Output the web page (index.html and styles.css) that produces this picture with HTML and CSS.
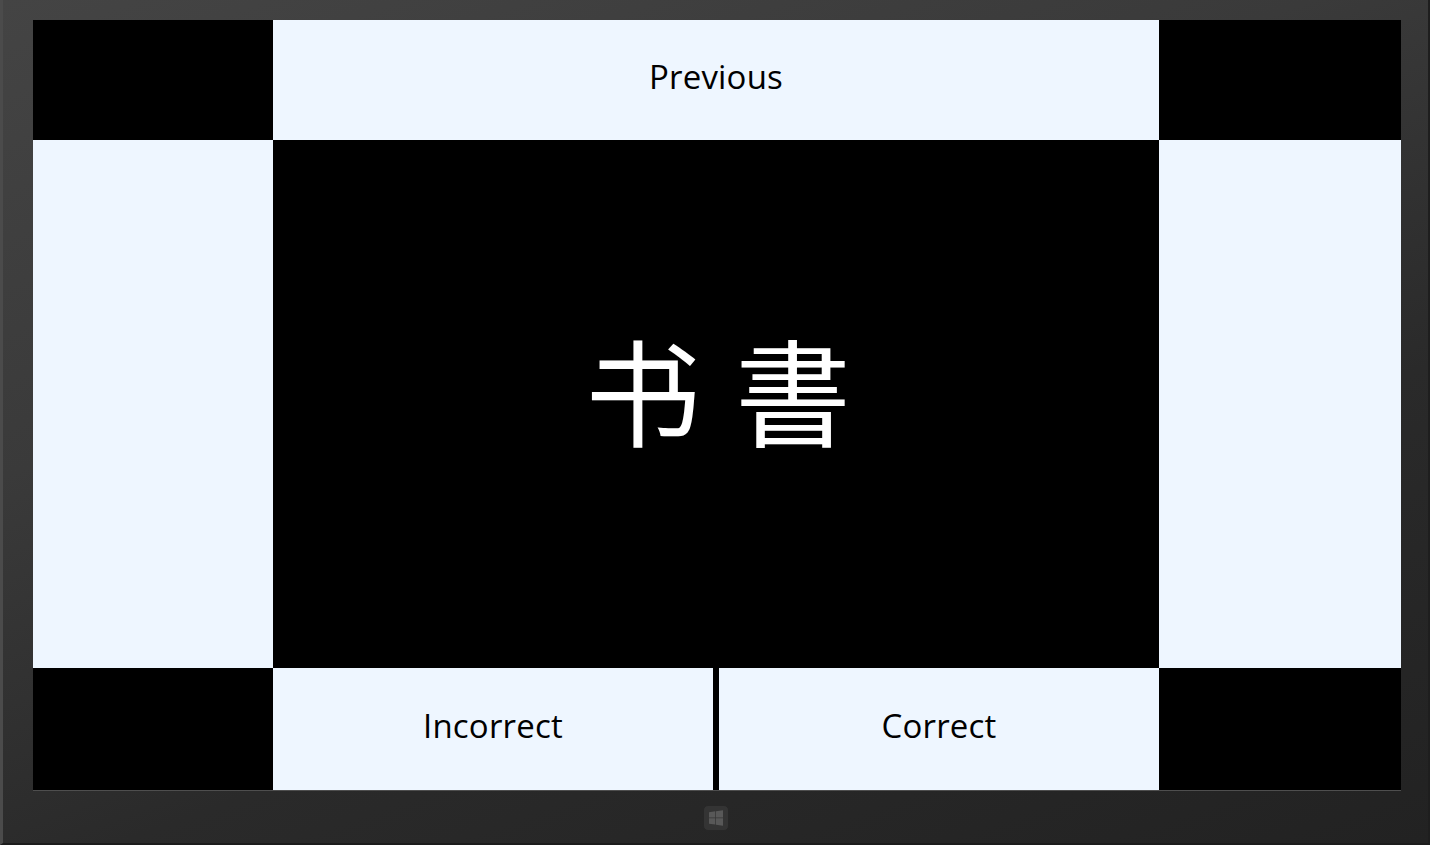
FILE: index.html
```html
<!DOCTYPE html>
<html lang="zh">
<head>
<meta charset="utf-8">
<title>Flashcard</title>
<link rel="stylesheet" href="styles.css">
</head>
<body>
<div class="device">
  <div class="screen">
    <div class="cell dark"></div>
    <div class="cell light label">Previous</div>
    <div class="cell dark"></div>
    <div class="cell light"></div>
    <div class="cell dark card">书 書</div>
    <div class="cell light"></div>
    <div class="cell dark"></div>
    <div class="cell answers">
      <div class="light label">Incorrect</div>
      <div class="light label">Correct</div>
    </div>
    <div class="cell dark"></div>
  </div>
  <div class="bezel-bottom">
    <div class="winbtn">
      <svg width="16" height="16" viewBox="0 0 16 16">
        <path d="M1 2.2 L7.3 1.3 V7.5 H1 Z M8 1.2 L15 0.2 V7.5 H8 Z M1 8.3 H7.3 V14.6 L1 13.7 Z M8 8.3 H15 V15.7 L8 14.7 Z" fill="#585858"/>
      </svg>
    </div>
  </div>
</div>
</body>
</html>
```
FILE: styles.css
```css
html, body {
  margin: 0;
  padding: 0;
}
body {
  width: 1430px;
  height: 845px;
  overflow: hidden;
  font-family: "Open Sans", "Noto Sans", sans-serif;
}
.device {
  width: 1430px;
  height: 845px;
  box-sizing: border-box;
  padding: 20px 29px 0 30px;
  background: linear-gradient(160deg, #444444 0%, #3a3a3a 35%, #2a2a2a 65%, #222222 100%);
  border-left: 3px solid #4b4b4b;
  border-right: 2px solid #1e1e1e;
  border-bottom: 2px solid #1c1c1c;
  display: flex;
  flex-direction: column;
}
.screen {
  width: 1368px;
  height: 770px;
  display: grid;
  grid-template-columns: 240px 886px 242px;
  grid-template-rows: 120px 528px 122px;
  background: #000;
  box-shadow: 0 1px 0 #4e4e4e;
}
.dark {
  background: #000;
}
.light {
  background: #eef6ff;
}
.label {
  display: flex;
  align-items: center;
  justify-content: center;
  color: #000;
  font-size: 33px;
  font-family: "Open Sans", sans-serif;
  letter-spacing: 0.2px;
  padding-bottom: 7px;
  box-sizing: border-box;
}
.card {
  display: flex;
  align-items: center;
  justify-content: center;
  color: #fff;
  font-family: "Noto Sans CJK SC", "Noto Sans CJK JP", sans-serif;
  font-size: 116px;
  word-spacing: 8px;
  padding-bottom: 34px;
  padding-left: 4px;
  box-sizing: border-box;
}
.answers {
  display: flex;
  gap: 6px;
  background: #000;
}
.answers .light {
  flex: 1;
}
.bezel-bottom {
  flex: 1;
  display: flex;
  justify-content: center;
  align-items: flex-start;
  padding-top: 15px;
}
.winbtn {
  width: 24px;
  height: 24px;
  border-radius: 5px;
  background: #343434;
  border: 1px solid #272727;
  display: flex;
  align-items: center;
  justify-content: center;
  margin-left: -1px;
}
```
